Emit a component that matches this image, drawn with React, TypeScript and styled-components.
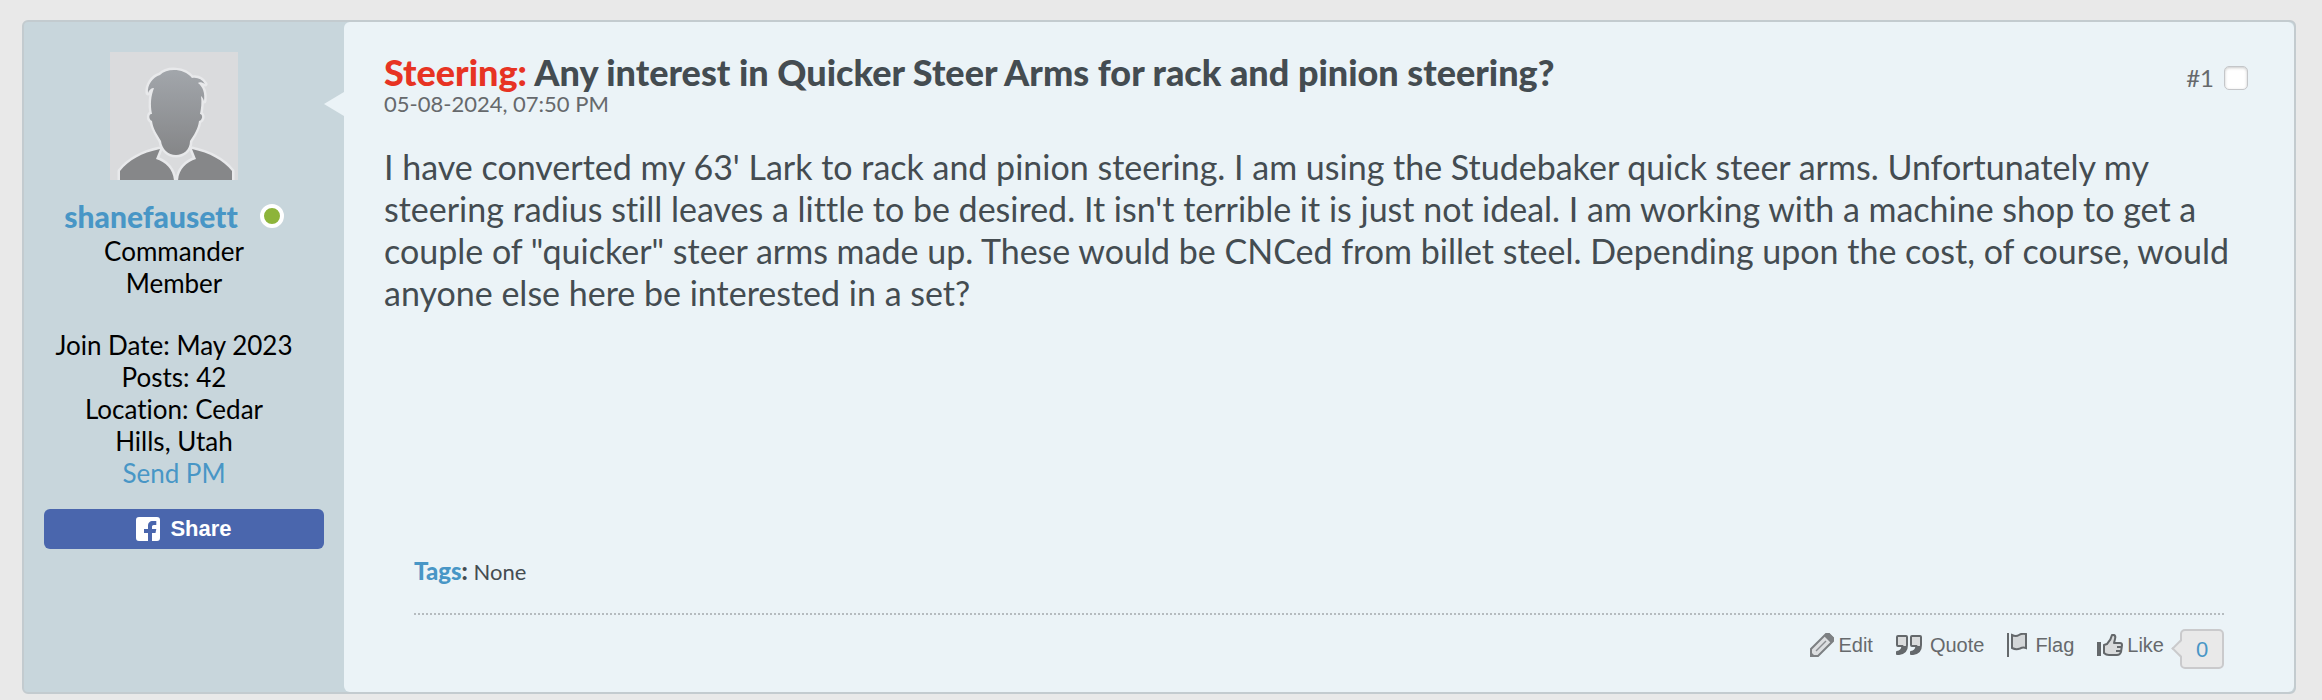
import React from "react";
import styled, { createGlobalStyle } from "styled-components";

const lato = `Lato, "Liberation Sans", sans-serif`;
const arial = `"Liberation Sans", Arial, sans-serif`;

const colors = {
  page: "#e9e9e9",
  edge: "#c3cbcf",
  side: "#c8d6dc",
  panel: "#ebf3f7",
  text: "#444c51",
  muted: "#66696c",
  link: "#4896c6",
};

const GlobalStyle = createGlobalStyle`
  *, *::before, *::after { box-sizing: border-box; }
  body {
    margin: 0;
    background: ${colors.page};
    font-family: ${lato};
    font-variant-ligatures: none;
  }
  a { color: inherit; text-decoration: none; }
`;

const Page = styled.main`
  padding: 20px 26px 6px 22px;
`;

const Post = styled.article`
  display: flex;
  border: 2px solid ${colors.edge};
  border-radius: 6px;
  background: ${colors.side};
`;

const UserPanel = styled.aside`
  flex: 0 0 320px;
  padding: 30px 20px;
`;

const UserInfo = styled.div`
  display: flex;
  flex-direction: column;
  align-items: center;
  width: 240px;
  margin-left: 10px;
  font-size: 26px;
  line-height: 32px;
  text-align: center;
  color: #000;
`;

const Avatar = styled.svg`
  display: block;
  width: 128px;
  height: 128px;
  margin-bottom: 20px;
`;

const NameRow = styled.div`
  display: flex;
  align-items: center;
  gap: 22px;
  margin-bottom: 3px;
`;

const UserName = styled.a`
  font-size: 30px;
  font-weight: 900;
  color: ${colors.link};
`;

const OnlineDot = styled.span`
  width: 24px;
  height: 24px;
  border: 4px solid #fff;
  border-radius: 50%;
  background: #8db43a;
`;

const Rank = styled.div`
  margin-bottom: 30px;
`;

const Stats = styled.ul`
  list-style: none;
  margin: 0;
  padding: 0;
  text-wrap: balance;
`;

const TextLink = styled.a`
  color: ${colors.link};
`;

const ShareButton = styled.button`
  display: flex;
  align-items: center;
  justify-content: center;
  gap: 10px;
  width: 100%;
  height: 40px;
  margin-top: 20px;
  padding: 0;
  border: 0;
  border-radius: 6px;
  background: #4a66ad;
  color: #fff;
  font: bold 22px ${arial};
`;

const Content = styled.section`
  position: relative;
  flex: 1;
  min-width: 0;
  padding: 32px 46px 23px 40px;
  border-radius: 6px;
  background: ${colors.panel};

  &::before {
    content: "";
    position: absolute;
    top: 70px;
    left: -20px;
    border: solid transparent;
    border-width: 12px 20px 12px 0;
    border-right-color: ${colors.panel};
  }
`;

const PostHead = styled.header`
  display: flex;
  justify-content: space-between;
  align-items: flex-start;
`;

const Title = styled.h2`
  margin: 0;
  font-size: 36px;
  line-height: 36px;
  font-weight: 900;
  color: ${colors.text};
`;

const Prefix = styled.span`
  color: #e73323;
`;

const PostTime = styled.time`
  display: block;
  font-size: 22px;
  line-height: 28px;
  color: ${colors.muted};
`;

const PostNumber = styled.label`
  display: flex;
  align-items: center;
  gap: 10px;
  margin-top: 10px;
  font-size: 24px;
  line-height: 28px;
  color: ${colors.muted};
`;

const Check = styled.input`
  appearance: none;
  width: 24px;
  height: 24px;
  margin: 0;
  border: 1px solid #c4c6c9;
  border-radius: 5px;
  background: #fff;
  box-shadow: inset 0 1px 3px #c8c8c8;
`;

const PostText = styled.p`
  min-height: 412px;
  margin: 28px 0 0;
  font-size: 34px;
  line-height: 42px;
  color: ${colors.text};
`;

const PostFoot = styled.footer`
  margin: 0 24px 0 30px;
`;

const Tags = styled.div`
  padding-bottom: 28px;
  border-bottom: 2px dotted #b5bbbf;
  font-size: 22px;
  line-height: 26px;
  color: ${colors.text};
`;

const TagsLabel = styled.strong`
  font-size: 24px;
  font-weight: 900;
`;

const Actions = styled.div`
  display: flex;
  justify-content: flex-end;
  align-items: flex-start;
  gap: 23px;
  margin-top: 14px;
`;

const Action = styled.button<{ $gap: number }>`
  display: flex;
  align-items: center;
  gap: ${(p) => p.$gap}px;
  height: 32px;
  padding: 0;
  border: 0;
  background: none;
  font: 20px ${arial};
  color: ${colors.muted};
`;

const LikeGroup = styled.div`
  display: flex;
  align-items: flex-start;
  gap: 16px;
`;

const LikeCount = styled.a`
  position: relative;
  width: 44px;
  height: 40px;
  border: 2px solid #cacacc;
  border-radius: 5px;
  background: ${colors.page};
  font-family: ${arial};
  font-size: 22px;
  line-height: 38px;
  text-align: center;
  color: ${colors.link};

  &::before {
    content: "";
    position: absolute;
    top: 11px;
    left: -8px;
    width: 13px;
    height: 13px;
    border: solid #cacacc;
    border-width: 0 0 2px 2px;
    background: linear-gradient(45deg, ${colors.page} 50%, transparent 50%);
    transform: rotate(45deg);
  }
`;

const AvatarArt = () => (
  <Avatar viewBox="0 0 128 128" role="img" aria-label="shanefausett's avatar">
    <defs>
      <linearGradient id="head" x1="0" y1="0" x2="0" y2="1">
        <stop offset="0" stopColor="#a2a6ab" />
        <stop offset="1" stopColor="#858688" />
      </linearGradient>
    </defs>
    <rect width="128" height="128" fill="#dadbdd" />
    <g stroke="#e8e9eb" strokeWidth="5" strokeLinejoin="round" paintOrder="stroke">
      <path d="M10 130V119C19 108 31 101 50 97L46 107C56 110 64 118 64 130Z" fill="#868789" />
      <path d="M122 130V119C113 108 100 101 82 97L86 107C76 110 68 118 68 130Z" fill="#868789" />
      <path
        d="M42 62C40 52 41 44 44 36C41 36 39 38 38 41C37 33 43 25 50 23C57 16 74 16 82 26C87 25 92 27 95 32C92 30 89 30 88 31C93 35 95 41 94 49C93 46 92 45 91 44C92 51 91 57 90 62C93 62 93 68 89 69C88 77 84 83 80 89C80 98 73 103 66 103C58 103 52 97 51 89C47 82 43 77 42 69C38 67 39 61 42 62Z"
        fill="url(#head)"
      />
    </g>
  </Avatar>
);

const FacebookIcon = () => (
  <svg width="24" height="24" viewBox="0 0 24 24" aria-hidden="true">
    <path
      d="M3 0H21Q24 0 24 3V21Q24 24 21 24H16V16H19.5L20.3 12H16V9.5Q16 8 17.7 8H20.3V4H17C13.5 4 12 6 12 9V12H8V16H12V24H3Q0 24 0 21V3Q0 0 3 0Z"
      fill="#fff"
    />
  </svg>
);

const PencilIcon = () => (
  <svg width="24" height="24" viewBox="0 0 24 24" aria-hidden="true">
    <path d="M1 23V16L16 1H19L23 5V8L8 23Z" fill="#dcdee0" stroke="#7d8083" strokeWidth="2" />
    <path d="M0 24V18L6 24ZM14 3L21 10L24 7V5L19 0H17Z" fill="#7d8083" />
    <path d="M6 18L16 8" stroke="#8b8e91" strokeWidth="1.5" />
  </svg>
);

const QuoteIcon = () => (
  <svg width="26" height="20" viewBox="0 0 26 20" aria-hidden="true">
    <g fill="#d9dbdc" stroke="#64686b" strokeWidth="2" strokeLinejoin="round">
      <path d="M2 1H10Q11 1 11 2V10Q11 18 3 19H1V17Q6 16 6.500 11H2Q1 11 1 10V2Q1 1 2 1Z" />
      <path d="M16 1H24Q25 1 25 2V10Q25 18 17 19H15V17Q20 16 20.500 11H16Q15 11 15 10V2Q15 1 16 1Z" />
    </g>
    <path d="M6 11H11Q10 18 3 19L1 17Q6 16 6 11ZM20 11H25Q24 18 17 19L15 17Q20 16 20 11Z" fill="#64686b" />
  </svg>
);

const FlagIcon = () => (
  <svg width="20" height="24" viewBox="0 0 20 24" aria-hidden="true">
    <path d="M1 0V24" stroke="#64686b" strokeWidth="2" />
    <path
      d="M5 2Q9 4 12 2Q15 0 19 1V15Q16 14 13 15.500Q9 17 5 15Z"
      fill="#d3d6d8"
      stroke="#64686b"
      strokeWidth="2"
    />
  </svg>
);

const ThumbIcon = () => (
  <svg width="26" height="22" viewBox="0 0 26 22" aria-hidden="true">
    <path d="M0 8H4V22H0Z" fill="#64686b" />
    <path
      d="M7 11L10 10Q14 6 15 1H17Q19 2 18 5L17 9H23Q25 9 25 11L24 18Q23 21 20 21H12Q9 21 7 19Z"
      fill="#d9dbdc"
      stroke="#64686b"
      strokeWidth="2"
      strokeLinejoin="round"
    />
    <path d="M20 13H25M19 17H24" stroke="#64686b" strokeWidth="2" />
  </svg>
);

export default function App() {
  return (
    <>
      <GlobalStyle />
      <Page>
        <Post>
          <UserPanel>
            <UserInfo>
              <AvatarArt />
              <NameRow>
                <UserName href="#user">shanefausett</UserName>
                <OnlineDot title="Online" />
              </NameRow>
              <Rank>Commander Member</Rank>
              <Stats>
                <li>Join Date: May 2023</li>
                <li>Posts: 42</li>
                <li>Location: Cedar Hills, Utah</li>
                <li>
                  <TextLink href="#pm">Send PM</TextLink>
                </li>
              </Stats>
            </UserInfo>
            <ShareButton type="button">
              <FacebookIcon />
              Share
            </ShareButton>
          </UserPanel>
          <Content>
            <PostHead>
              <div>
                <Title>
                  <Prefix>Steering:</Prefix> Any interest in Quicker Steer Arms for rack and pinion steering?
                </Title>
                <PostTime dateTime="2024-05-08T19:50">05-08-2024, 07:50 PM</PostTime>
              </div>
              <PostNumber>
                <a href="#post1">#1</a>
                <Check type="checkbox" aria-label="Select post" />
              </PostNumber>
            </PostHead>
            <PostText>
              I have converted my 63' Lark to rack and pinion steering. I am using the Studebaker quick
              steer arms. Unfortunately my steering radius still leaves a little to be desired. It isn't
              terrible it is just not ideal. I am working with a machine shop to get a couple of
              "quicker" steer arms made up. These would be CNCed from billet steel. Depending upon the
              cost, of course, would anyone else here be interested in a set?
            </PostText>
            <PostFoot>
              <Tags>
                <TagsLabel>
                  <TextLink href="#tags">Tags</TextLink>:
                </TagsLabel>{" "}
                None
              </Tags>
              <Actions>
                <Action type="button" $gap={4}>
                  <PencilIcon />
                  Edit
                </Action>
                <Action type="button" $gap={8}>
                  <QuoteIcon />
                  Quote
                </Action>
                <Action type="button" $gap={8}>
                  <FlagIcon />
                  Flag
                </Action>
                <LikeGroup>
                  <Action type="button" $gap={4}>
                    <ThumbIcon />
                    Like
                  </Action>
                  <LikeCount href="#likes">0</LikeCount>
                </LikeGroup>
              </Actions>
            </PostFoot>
          </Content>
        </Post>
      </Page>
    </>
  );
}
